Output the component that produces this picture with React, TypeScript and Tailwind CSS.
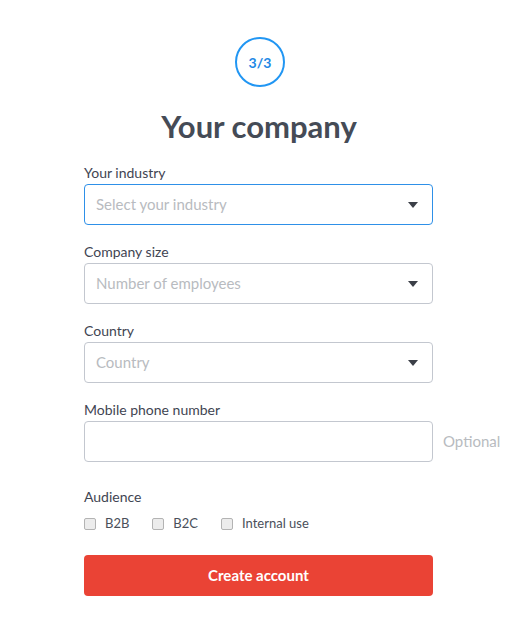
import React from 'react';

const fieldFont = { fontFamily: 'Lato, "Noto Sans", sans-serif' };

const Caret = () => (
  <svg width="10" height="6" viewBox="0 0 10 6" className="shrink-0">
    <path d="M0 0 L10 0 L5 6 Z" fill="#3b3f47" />
  </svg>
);

interface SelectProps {
  label: string;
  placeholder: string;
  focused?: boolean;
}

const SelectField: React.FC<SelectProps> = ({ label, placeholder, focused }) => (
  <div className="mb-[17px]">
    <div className="h-5 mb-px text-[14px] leading-5 text-[#3f4552]">{label}</div>
    <div
      className={`h-[41px] w-[349px] rounded-[4px] border flex items-center justify-between pl-[11px] pr-[14px] ${
        focused ? 'border-[#2e90e8]' : 'border-[#c3c7cf]'
      }`}
    >
      <span className="text-[15px] text-[#b8bbc0]">{placeholder}</span>
      <Caret />
    </div>
  </div>
);

const Check = ({ label }: { label: string }) => (
  <label className="flex items-center gap-[9px] mr-[23px]">
    <span className="w-3 h-3 rounded-[2px] border border-[#b3b3b3] bg-[#ececec]" />
    <span className="text-[13px] text-[#4a4f5a]">{label}</span>
  </label>
);

export default function App() {
  return (
    <div className="min-h-screen bg-white" style={fieldFont}>
      <div className="pt-[37px] flex flex-col items-center">
        <div className="w-[50px] h-[50px] rounded-full border-2 border-[#2196f3] flex items-center justify-center mr-[5px]">
          <span className="text-[14px] font-bold text-[#1e88e5]">3/3</span>
        </div>
        <h1 className="mt-[19px] mr-[7px] text-[31px] leading-[40px] font-bold text-[#454b56]">Your company</h1>
      </div>

      <div className="ml-[84px] mt-[17px]">
        <SelectField label="Your industry" placeholder="Select your industry" focused />
        <SelectField label="Company size" placeholder="Number of employees" />
        <SelectField label="Country" placeholder="Country" />

        {/* Phone */}
        <div>
          <div className="h-5 mb-px text-[14px] leading-5 text-[#3f4552]">Mobile phone number</div>
          <div className="flex items-center">
            <div className="h-[41px] w-[349px] rounded-[4px] border border-[#c3c7cf]" />
            <span className="ml-[10px] text-[15px] text-[#b8bbc0]">Optional</span>
          </div>
        </div>

        {/* Audience */}
        <div className="mt-[25px]">
          <div className="h-5 text-[14px] leading-5 text-[#3f4552]">Audience</div>
          <div className="flex items-center mt-[10px] h-[14px]">
            <Check label="B2B" />
            <Check label="B2C" />
            <Check label="Internal use" />
          </div>
        </div>

        <button className="mt-[24px] h-[41px] w-[349px] rounded-[4px] bg-[#ea4335] text-white text-[15px] font-bold">
          Create account
        </button>
      </div>
    </div>
  );
}
